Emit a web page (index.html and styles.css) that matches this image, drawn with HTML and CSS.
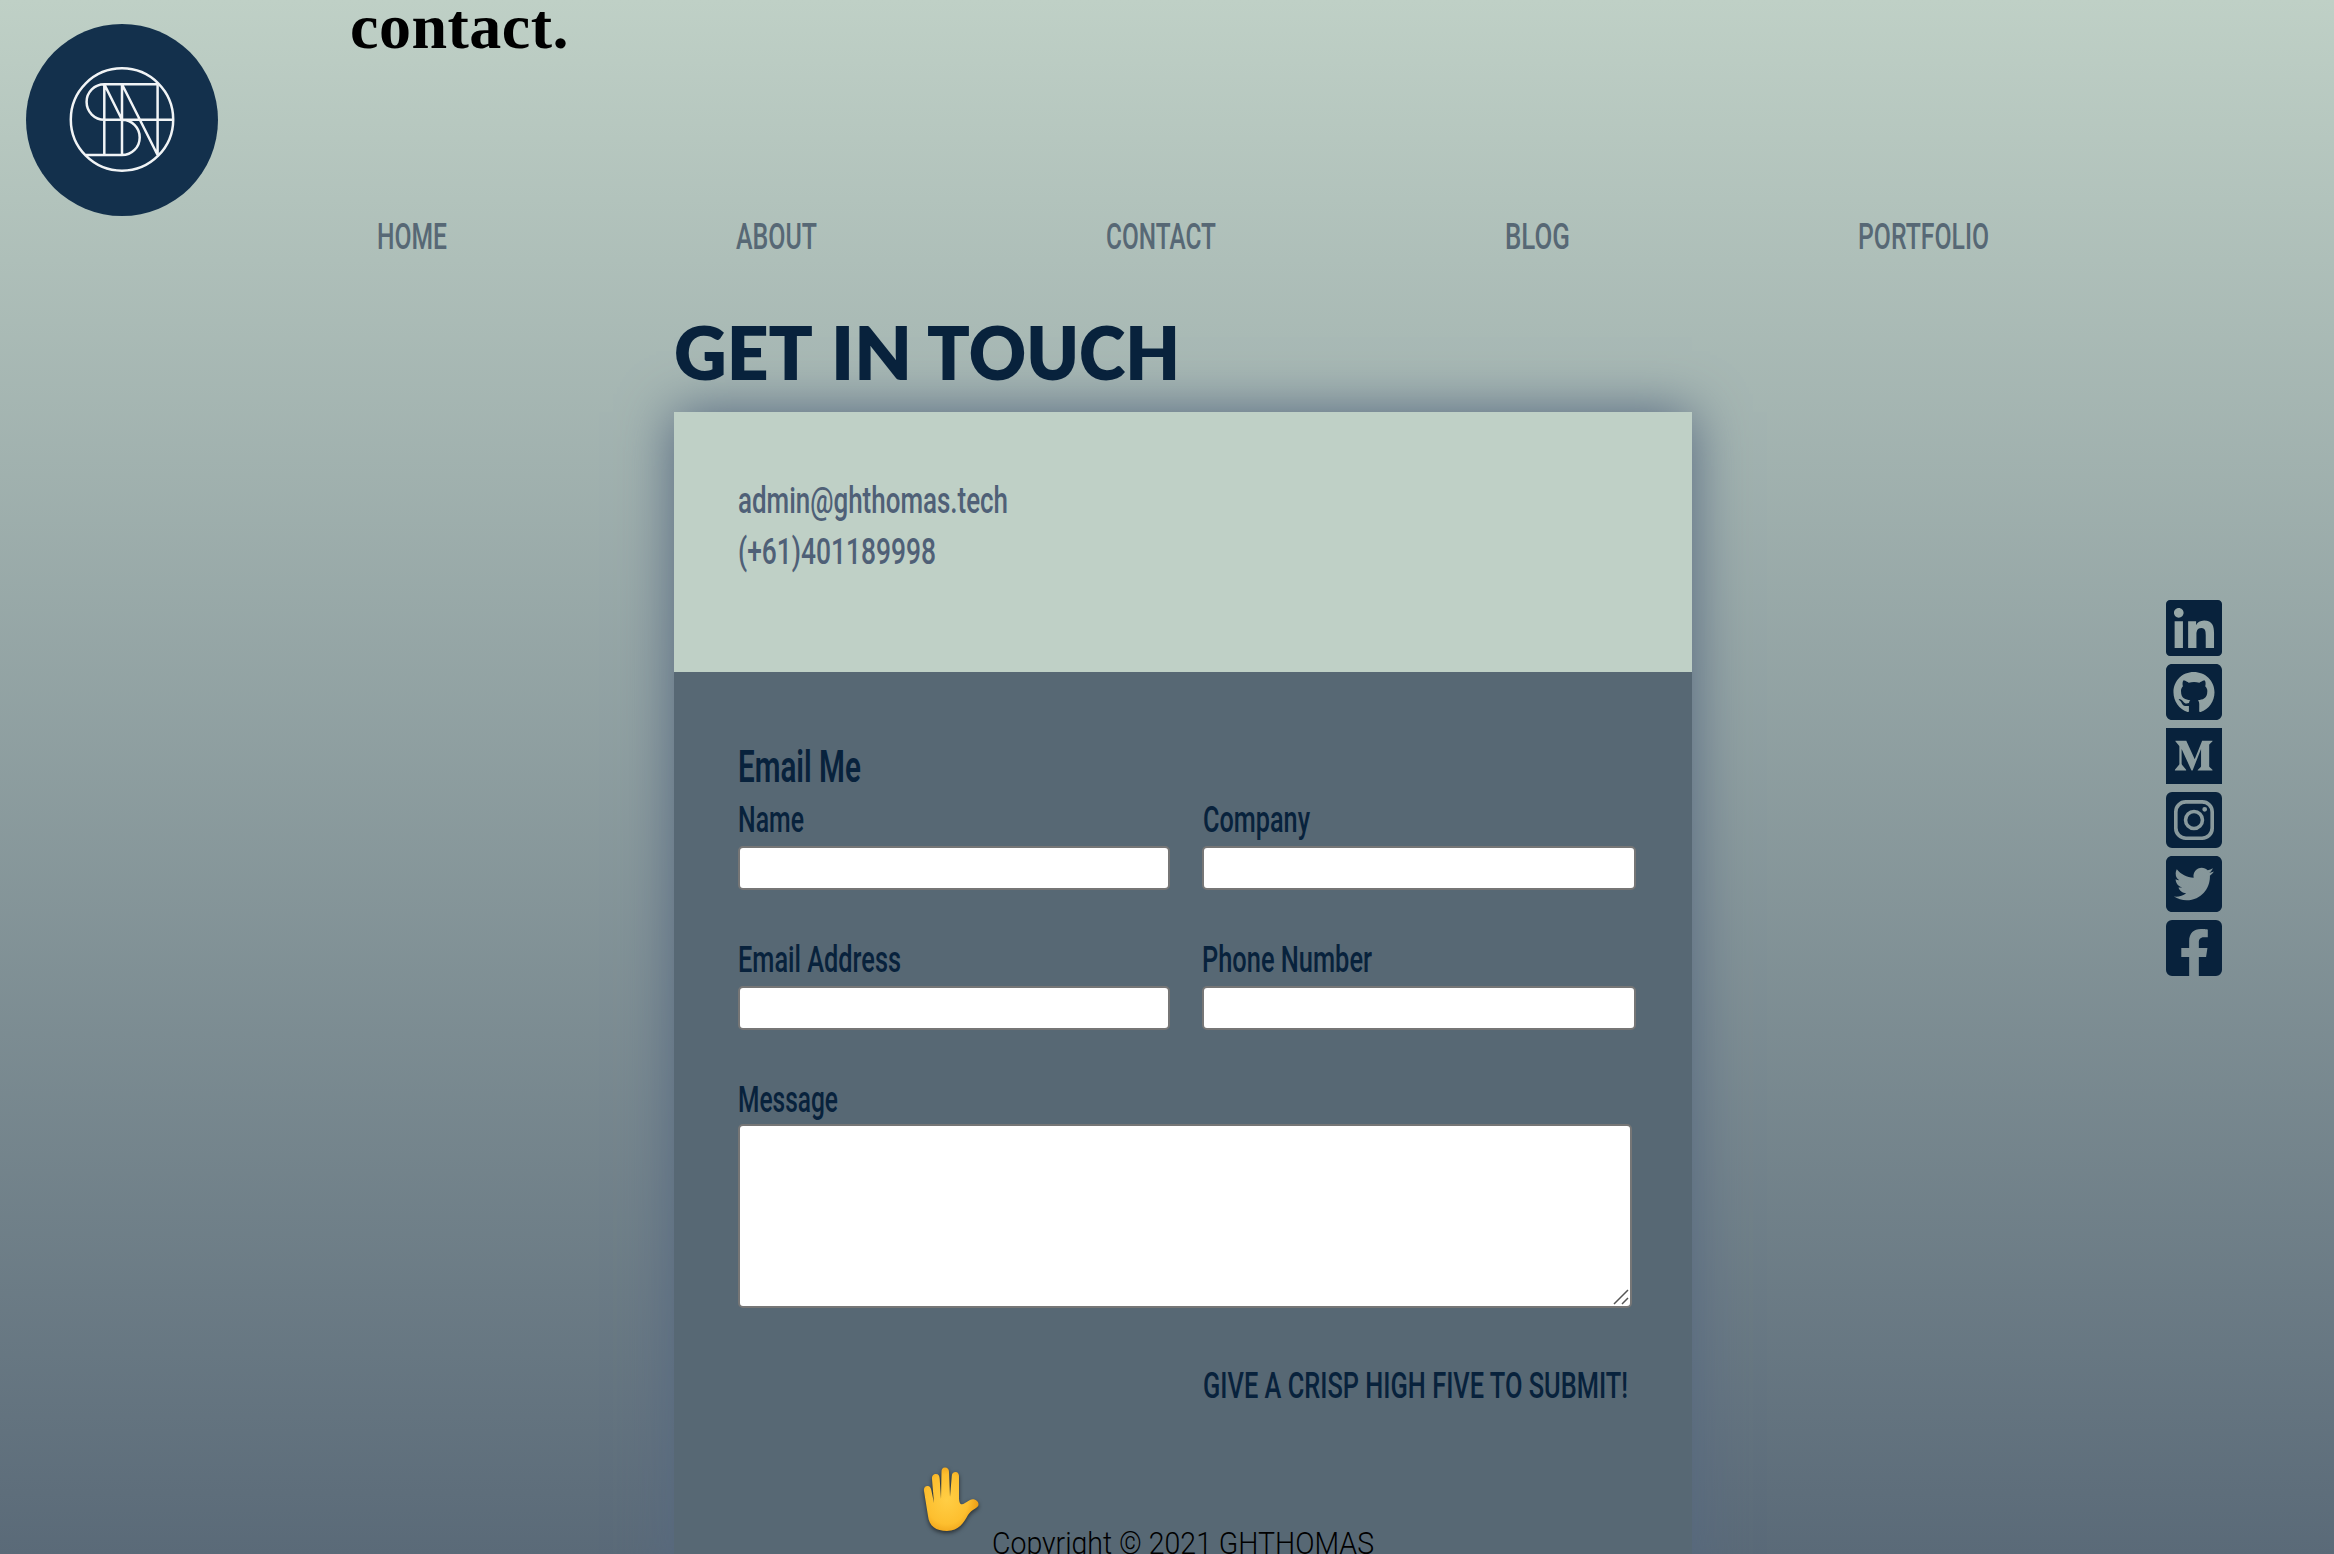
FILE: index.html
```html
<!DOCTYPE html>
<html lang="en">
<head>
<meta charset="utf-8">
<title>contact.</title>
<link rel="stylesheet" href="styles.css">
</head>
<body>
<div class="page">
  <svg class="logo" viewBox="26 24 192 192" aria-label="Logo">
    <circle class="logo-disc" cx="122" cy="120" r="96"/>
    <g class="logo-lines">
      <circle cx="122" cy="119.5" r="51.2"/>
      <path d="M157.6 84.3H104.3a17.7 17.7 0 0 0 0 35.4H173M104.3 84.3V155M122 84.3V155M157.6 84.3V155M104.3 84.3L122 119.7a17.7 17.7 0 0 1 0 35.4H86M122 84.3L157.6 155"/>
    </g>
  </svg>

  <h1 class="page-title">contact.</h1>

  <nav class="nav">
    <a><svg class="t" width="68" height="40"><text x="-1" y="32" textLength="70" lengthAdjust="spacingAndGlyphs">HOME</text></svg></a>
    <a><svg class="t" width="81" height="40"><text x="0" y="32" textLength="81" lengthAdjust="spacingAndGlyphs">ABOUT</text></svg></a>
    <a><svg class="t" width="109" height="40"><text x="-1" y="32" textLength="110" lengthAdjust="spacingAndGlyphs">CONTACT</text></svg></a>
    <a><svg class="t" width="63" height="40"><text x="-1" y="32" textLength="65" lengthAdjust="spacingAndGlyphs">BLOG</text></svg></a>
    <a><svg class="t" width="130" height="40"><text x="-1" y="32" textLength="131" lengthAdjust="spacingAndGlyphs">PORTFOLIO</text></svg></a>
  </nav>

  <main class="contact">
    <h2 class="heading"><svg class="t heading-text" width="510" height="80"><text x="-3" y="64" textLength="139" lengthAdjust="spacingAndGlyphs">GET</text> <text x="154" y="64" textLength="81" lengthAdjust="spacingAndGlyphs">IN</text> <text x="250" y="64" textLength="253" lengthAdjust="spacingAndGlyphs">TOUCH</text></svg></h2>
    <div class="card">
      <section class="details">
        <svg class="t" width="280" height="50"><text x="-1" y="37" textLength="270" lengthAdjust="spacingAndGlyphs">admin@ghthomas.tech</text></svg>
        <svg class="t" width="280" height="50"><text x="-1" y="37.500" textLength="198" lengthAdjust="spacingAndGlyphs">(+61)401189998</text></svg>
      </section>
      <form class="form">
        <h3 class="form-title"><svg class="t" width="200" height="54"><text x="-2" y="42" textLength="123" lengthAdjust="spacingAndGlyphs">Email Me</text></svg></h3>
        <div class="fields">
          <label class="field"><svg class="t" width="300" height="46"><text x="-1" y="31.500" textLength="66" lengthAdjust="spacingAndGlyphs">Name</text></svg><input type="text"></label>
          <label class="field"><svg class="t" width="300" height="46"><text x="0" y="31.500" textLength="107" lengthAdjust="spacingAndGlyphs">Company</text></svg><input type="text"></label>
          <label class="field"><svg class="t" width="300" height="46"><text x="-1" y="31.500" textLength="163" lengthAdjust="spacingAndGlyphs">Email Address</text></svg><input type="text"></label>
          <label class="field"><svg class="t" width="300" height="46"><text x="-1" y="31.500" textLength="170" lengthAdjust="spacingAndGlyphs">Phone Number</text></svg><input type="text"></label>
        </div>
        <label class="field message">
          <svg class="t" width="300" height="44"><text x="-1" y="31.500" textLength="100" lengthAdjust="spacingAndGlyphs">Message</text></svg>
          <span class="area"><textarea></textarea><svg class="grip" width="16" height="16" viewBox="0 0 16 16"><path d="M1 15L15 1M9 15l6-6"/></svg></span>
        </label>
        <div class="submit"><svg class="t" width="430" height="46"><text x="0" y="32.500" textLength="425" lengthAdjust="spacingAndGlyphs">GIVE A CRISP HIGH FIVE TO SUBMIT!</text></svg></div>
        <svg class="hand" width="60" height="70" viewBox="0 0 60 70">
          <defs>
            <radialGradient id="skin" cx="0.42" cy="0.5" r="0.6">
              <stop offset="0" stop-color="#ffce45"/><stop offset="0.65" stop-color="#fdbf2f"/><stop offset="1" stop-color="#eb9a12"/>
            </radialGradient>
          </defs>
          <path fill="url(#skin)" d="M6 49L2 24C1.500 20 4 19 5.500 19C8 19 9 21 9.500 24L12 36L10 12C9.700 8.500 11.500 7 14 7C16.500 7 17.500 8.500 17.700 12L19 32L19.500 5C19.500 2 20.500 .5 23 .5C25.500 .5 27 2 27 5L28 30L29.800 9C30 6 31.500 5 33.500 5C36 5 37.300 7 37 10L37 30C37 37 39 39 43 36L48 33C52 31 57 34 56.500 38C56 41 50 42 46 48C42 55 37 64 25 64C14 64 7 59 6 49Z"/>
        </svg>
      </form>
    </div>
  </main>

  <aside class="social">
    <svg viewBox="0 32 448 448"><path d="M416 32H31.900C14.300 32 0 46.500 0 64.300v383.400C0 465.500 14.300 480 31.900 480H416c17.600 0 32-14.500 32-32.300V64.300c0-17.800-14.400-32.300-32-32.300zM135.400 416H69V202.200h66.500V416zm-33.200-243c-21.300 0-38.500-17.300-38.500-38.500S80.900 96 102.200 96c21.200 0 38.500 17.300 38.500 38.500 0 21.300-17.200 38.500-38.500 38.500zm282.100 243h-66.400V312c0-24.800-.5-56.700-34.500-56.700-34.600 0-39.900 27-39.900 54.900V416h-66.400V202.200h63.700v29.200h.9c8.900-16.800 30.600-34.500 62.900-34.500 67.200 0 79.700 44.300 79.700 101.900V416z"/></svg>
    <svg viewBox="0 32 448 448"><path d="M400 32H48C21.500 32 0 53.500 0 80v352c0 26.500 21.500 48 48 48h352c26.500 0 48-21.500 48-48V80c0-26.500-21.500-48-48-48zM277.300 415.700c-8.400 1.500-11.500-3.700-11.500-8 0-5.400.2-33 .2-55.300 0-15.600-5.200-25.500-11.300-30.700 37-4.100 76-9.200 76-73.100 0-18.200-6.500-27.300-17.100-39 1.700-4.300 7.400-22-1.700-45-13.900-4.300-45.700 17.900-45.700 17.900-13.200-3.700-27.500-5.600-41.600-5.600-14.100 0-28.400 1.900-41.600 5.600 0 0-31.800-22.200-45.700-17.900-9.100 22.900-3.500 40.600-1.700 45-10.600 11.700-15.600 20.800-15.600 39 0 63.600 37.300 69 74.300 73.100-4.800 4.300-9.100 11.700-10.600 22.300-9.500 4.300-33.800 11.700-48.300-13.900-9.100-15.800-25.500-17.100-25.500-17.100-16.200-.2-1.100 10.200-1.100 10.200 10.800 5 18.400 24.200 18.400 24.200 9.700 29.700 56.100 19.700 56.100 19.700 0 13.900.2 36.500.2 40.600 0 4.300-3 9.500-11.500 8-66-22.100-112.200-84.900-112.200-158.300 0-91.800 70.200-161.500 162-161.500S388 165.600 388 257.400c.1 73.400-44.700 136.300-110.700 158.300z"/></svg>
    <svg viewBox="0 32 448 448"><path d="M0 32v448h448V32H0zm372.200 106.100l-24 23c-2.100 1.600-3.100 4.200-2.700 6.700v169.300c-.4 2.600.6 5.200 2.700 6.700l23.500 23v5.100h-118V367l24.300-23.600c2.400-2.400 2.400-3.100 2.400-6.700V199.800l-67.600 171.600h-9.100L125 199.800v115c-.7 4.800 1 9.700 4.400 13.200l31.600 38.300v5.100H71.200v-5.100l31.600-38.300c3.400-3.500 4.900-8.400 4.100-13.200v-133c.4-3.700-1-7.300-3.800-9.800L75 138.100V133h87.300l67.400 148L289 133.100h83.200v5z"/></svg>
    <svg viewBox="0 32 448 448"><path fill-rule="evenodd" d="M48 32H400a48 48 0 0 1 48 48V432a48 48 0 0 1-48 48H48a48 48 0 0 1-48-48V80a48 48 0 0 1 48-48zM158 96a94 94 0 0 0-94 94V322a94 94 0 0 0 94 94H290a94 94 0 0 0 94-94V190a94 94 0 0 0-94-94zM160 125H288a67 67 0 0 1 67 67V320a67 67 0 0 1-67 67H160a67 67 0 0 1-67-67V192a67 67 0 0 1 67-67zM224 174a82 82 0 1 0 0 164a82 82 0 1 0 0-164zM224 202.700a53.300 53.300 0 1 1 0 106.600a53.300 53.300 0 1 1 0-106.600zM309.500 151.500a19 19 0 1 0 0 38a19 19 0 1 0 0-38z"/></svg>
    <svg viewBox="0 32 448 448"><path d="M400 32H48C21.500 32 0 53.500 0 80v352c0 26.500 21.500 48 48 48h352c26.500 0 48-21.500 48-48V80c0-26.500-21.500-48-48-48zm-48.900 158.800c.2 2.800.2 5.700.2 8.500 0 86.700-66 186.600-186.600 186.600-37.200 0-71.700-10.800-100.700-29.400 5.300.6 10.400.8 15.800.8 30.700 0 58.900-10.400 81.400-28-28.800-.6-53-19.500-61.300-45.500 10.100 1.500 19.200 1.500 29.600-1.200-30-6.100-52.500-32.500-52.500-64.400v-.8c8.700 4.900 18.900 7.900 29.600 8.300a65.447 65.447 0 0 1-29.200-54.600c0-12.200 3.200-23.400 8.900-33.100 32.300 39.800 80.800 65.800 135.200 68.600-9.300-44.500 24-80.600 64-80.600 18.900 0 35.900 7.900 47.900 20.700 14.800-2.800 29-8.300 41.600-15.800-4.900 15.200-15.200 28-28.800 36.100 13.200-1.400 26-5.100 37.800-10.200-8.900 13.100-20.100 24.700-32.900 34z"/></svg>
    <svg viewBox="0 32 448 448"><path d="M400 32H48A48 48 0 0 0 0 80v352a48 48 0 0 0 48 48h137.250V327.690h-63V256h63v-54.640c0-62.150 37-96.480 93.670-96.480 27.140 0 55.520 4.840 55.520 4.840v61h-31.270c-30.810 0-40.420 19.120-40.420 38.730V256h68.780l-11 71.690h-57.780V480H400a48 48 0 0 0 48-48V80a48 48 0 0 0-48-48z"/></svg>
  </aside>

  <footer class="footer"><svg class="t footer-text" width="384" height="30"><text x="-1" y="29.500" textLength="382" lengthAdjust="spacingAndGlyphs">Copyright © 2021 GHTHOMAS</text></svg></footer>
</div>
</body>
</html>
```
FILE: styles.css
```css
* { box-sizing: border-box; }

body {
  margin: 0;
  font-family: Roboto, "Liberation Sans", sans-serif;
}

h1, h2, h3 { margin: 0; }

.page {
  position: relative;
  height: 1554px;
  overflow: hidden;
  background: linear-gradient(180deg, #bfd0c6 0%, #5a6a78 100%);
}

.t {
  display: block;
  overflow: visible;
  font-size: 36.5px;
  font-weight: 500;
  fill: currentColor;
}

.logo {
  position: absolute;
  left: 26px;
  top: 24px;
  width: 192px;
  height: 192px;
}
.logo-disc { fill: #13304c; }
.logo-lines {
  fill: none;
  stroke: #f1f4f6;
  stroke-width: 2.5;
}

.page-title {
  height: 217px;
  padding-left: 350px;
  font: bold 64px/70px "Liberation Serif", serif;
  letter-spacing: 0.5px;
  margin-top: -8px;
  color: #000;
}

.nav {
  display: flex;
  justify-content: space-between;
  margin-top: 8px;
  padding: 0 345px 0 378px;
  color: #576875;
}

.contact {
  width: 1018px;
  margin: 59px 0 0 674px;
}

.heading {
  height: 96px;
  padding-left: 3px;
  color: #08223c;
}
.heading-text {
  font-family: Lato, sans-serif;
  font-weight: 800;
  font-size: 74px;
}

.card {
  height: 1180px;
  background: #576874;
  box-shadow: 0 0 50px #566880;
}

.details {
  height: 260px;
  padding: 64px 65px 0;
  background: #bfd0c6;
  color: #4f6077;
}

.form {
  position: relative;
  padding: 68px 56px 0 64px;
  color: #08223c;
}
.form-title { height: 60px; padding-left: 2px; }
.form-title .t { font-size: 43.5px; font-weight: 600; }

.fields {
  display: grid;
  grid-template-columns: 432px 434px;
  column-gap: 32px;
  row-gap: 50px;
}

.field { display: block; }
.field .t { margin-left: 1px; }

input, textarea {
  display: block;
  width: 100%;
  height: 44px;
  margin: 0;
  border: 2px solid #767676;
  border-radius: 5px;
  background: #fff;
}

.message { width: 894px; margin-top: 50px; }
.area { display: block; position: relative; }
textarea { height: 184px; resize: none; }
.grip {
  position: absolute;
  right: 3px;
  bottom: 3px;
  fill: none;
  stroke: #555;
  stroke-width: 1.5;
}

.submit { margin: 57px 0 0 465px; }

.hand {
  position: absolute;
  left: 248px;
  top: 795px;
  filter: drop-shadow(0 2px 2px rgba(0, 0, 0, 0.55));
}

.social {
  position: absolute;
  left: 2166px;
  top: 600px;
  display: flex;
  flex-direction: column;
  gap: 8px;
}
.social svg { width: 56px; height: 56px; fill: #08223c; }

.footer {
  position: absolute;
  left: 993px;
  top: 1524px;
  color: #000;
}
.footer-text { font-size: 32px; font-weight: 300; }
```
